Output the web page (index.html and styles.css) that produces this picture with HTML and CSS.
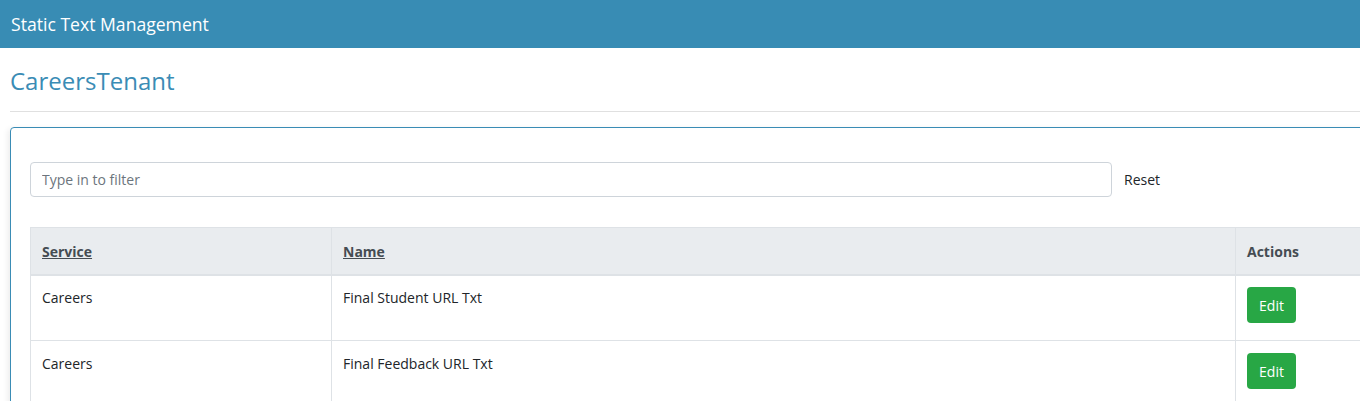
FILE: index.html
```html
<!DOCTYPE html>
<html>
<head>
<meta charset="utf-8">
<link rel="stylesheet" href="styles.css">
</head>
<body>
<header class="topbar">Static Text Management</header>
<main class="page">
  <h1 class="tenant">CareersTenant</h1>
  <hr class="divider">
  <section class="card">
    <div class="filter-row">
      <input class="filter" type="text" placeholder="Type in to filter">
      <span class="reset">Reset</span>
    </div>
    <table class="grid">
      <thead>
        <tr>
          <th class="col-service"><a>Service</a></th>
          <th class="col-name"><a>Name</a></th>
          <th class="col-actions">Actions</th>
        </tr>
      </thead>
      <tbody>
        <tr>
          <td>Careers</td>
          <td>Final Student URL Txt</td>
          <td><button class="edit">Edit</button></td>
        </tr>
        <tr>
          <td>Careers</td>
          <td>Final Feedback URL Txt</td>
          <td><button class="edit">Edit</button></td>
        </tr>
      </tbody>
    </table>
  </section>
</main>
</body>
</html>
```
FILE: styles.css
```css
html, body { margin: 0; padding: 0; }
body {
  font-family: "Open Sans", "Noto Sans", sans-serif;
  color: #212529;
  background: #fff;
  overflow: hidden;
  width: 1360px;
  height: 401px;
}
.topbar {
  height: 48px;
  background: #388cb4;
  color: #fff;
  font-size: 17.6px;
  line-height: 48px;
  padding-left: 11px;
}
.page {
  padding-left: 10px;
  width: 1420px;
}
.tenant {
  margin: 0;
  padding-top: 18px;
  height: 45px;
  font-weight: 400;
  font-size: 24px;
  line-height: 30px;
  color: #3a8cb5;
}
.divider {
  margin: 0;
  border: 0;
  border-top: 1px solid #e0e0e0;
}
.card {
  margin-top: 15px;
  border: 1px solid #3a8cb5;
  border-radius: 4px;
  box-shadow: -2px 2px 6px rgba(0,0,0,0.08);
  padding: 34px 19px 0;
  height: 300px;
}
.filter-row {
  display: flex;
  align-items: center;
}
.filter {
  width: 1082px;
  height: 35px;
  box-sizing: border-box;
  border: 1px solid #ced4da;
  border-radius: 4px;
  padding: 0 11px;
  font-family: inherit;
  font-size: 14px;
  color: #495057;
}
.filter::placeholder { color: #6c757d; }
.reset {
  margin-left: 12px;
  font-size: 14px;
  color: #212529;
}
.grid {
  margin-top: 30px;
  border-collapse: collapse;
  width: 1400px;
  font-size: 14px;
}
.grid th, .grid td {
  border: 1px solid #dee2e6;
  text-align: left;
  vertical-align: top;
  padding: 12px 11px;
}
.grid thead th {
  background: #e9ecef;
  color: #454c53;
  font-weight: 700;
  height: 22px;
  vertical-align: middle;
  border-bottom: 2px solid #dee2e6;
}
.grid th a { text-decoration: underline; }
.col-service { width: 278px; }
.col-name { width: 881px; }
.grid tbody td { height: 40px; }
.grid tbody tr + tr td { padding-top: 13px; }
.edit {
  margin-top: -1px;
  background: #28a745;
  color: #fff;
  border: 0;
  border-radius: 4px;
  font-family: inherit;
  font-size: 14px;
  width: 49px;
  height: 36px;
  padding: 0;
}
```
